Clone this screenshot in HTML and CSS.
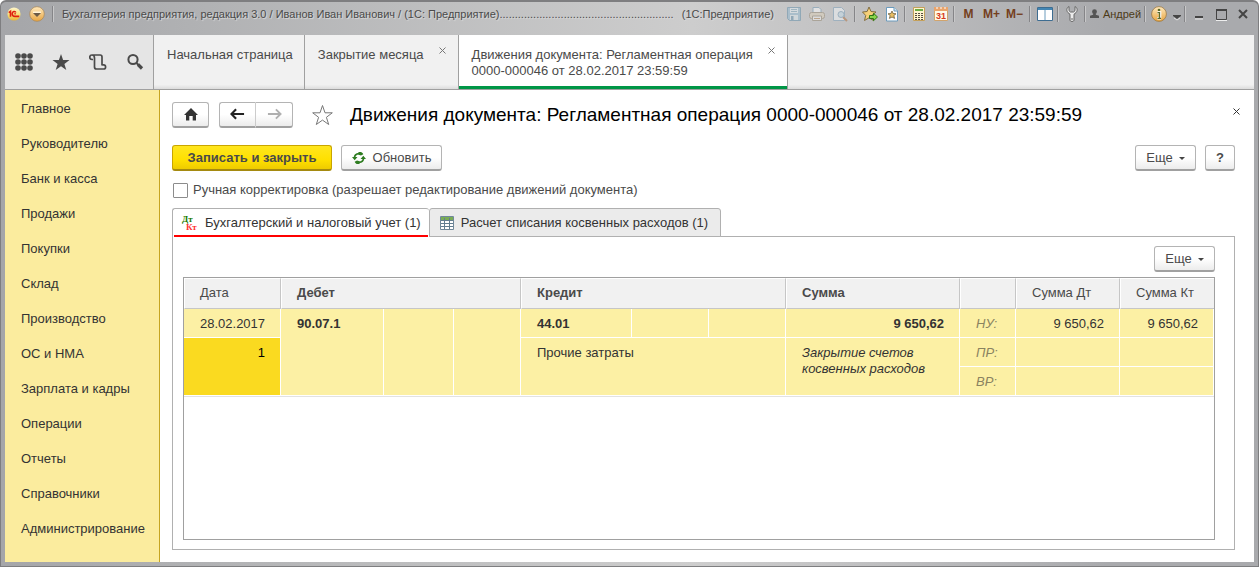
FILE: index.html
```html
<!DOCTYPE html>
<html lang="ru">
<head>
<meta charset="utf-8">
<title>Движения документа</title>
<link rel="stylesheet" href="styles.css">
</head>
<body>
<div class="window">
  <header class="titlebar">
    <svg class="brand" viewBox="0 0 16 16" aria-hidden="true"><defs><linearGradient id="gold" x1="0" y1="0" x2="0" y2="1"><stop offset="0" stop-color="#fff6cc"/><stop offset=".6" stop-color="#f5dc70"/><stop offset="1" stop-color="#e8b33a"/></linearGradient></defs><circle cx="8" cy="8" r="7.5" fill="url(#gold)"/><path d="M2 6.500 4 5v6M10 6.300C9.500 4.500 6 4.800 6 7.700c0 2 1.500 3 3 3h5M10 7.800H8.500" fill="none" stroke="#e02010" stroke-width="1.800"/></svg>
    <button class="round" aria-label="Главное меню"><svg viewBox="0 0 16 16"><defs><linearGradient id="amber" x1="0" y1="0" x2="0" y2="1"><stop offset="0" stop-color="#ffe9bd"/><stop offset="1" stop-color="#e8a541"/></linearGradient></defs><circle cx="8" cy="8" r="7.300" fill="url(#amber)" stroke="#a98555" stroke-width=".7"/><path d="M4 5.500h8v1.500H4z" fill="#fff3d8"/><path d="M4 7h8l-4 4z" fill="#6b5a45"/></svg></button>
    <i class="sep brand-sep"></i>
    <div class="title"><span>Бухгалтерия предприятия, редакция 3.0 / Иванов Иван Иванович / (1С: Предприятие).........................................................</span><span>(1С:Предприятие)</span></div>
    <div class="tools">
      <button class="faded" aria-label="Сохранить"><svg viewBox="0 0 16 16"><path d="M1.500 1.500h13v13h-11l-2-2z" fill="#8fb8cf" stroke="#5d8ca8"/><path d="M4 2h8v5H4z" fill="#e4eff5"/><path d="M5 3.500h6M5 5.500h6" stroke="#7ca5bb"/><path d="M4 9h8v5H4z" fill="#dbe8ee"/><path d="M5 10h2.500v4H5z" fill="#5d8ca8"/></svg></button>
      <button class="faded" aria-label="Печать"><svg viewBox="0 0 16 16"><path d="M4 1.500h6l2 2V7H4z" fill="#fff" stroke="#6f98b5"/><rect x=".5" y="6.500" width="15" height="6" rx="2" fill="#ddd0b8" stroke="#92856f"/><path d="M3.500 10h9v4.500h-9z" fill="#f5f5f5" stroke="#92856f"/><path d="M5 12.500h6" stroke="#b48650"/></svg></button>
      <button class="faded" aria-label="Предварительный просмотр"><svg viewBox="0 0 16 16"><path d="M1.500 1.500h8l3 3v10h-11z" fill="#f4f8fb" stroke="#7ba0bb"/><path d="m11 11 4 4" stroke="#b06f3c" stroke-width="2"/><circle cx="9" cy="8.500" r="3" fill="#c9e1ed" stroke="#7ba0bb"/></svg></button>
      <i class="sep wide"></i>
      <button aria-label="Добавить в избранное"><svg viewBox="0 0 16 16"><path d="m7 1 2 4.500 5 .5-4 3.300 1.200 5L7 11.800 2.500 14.500l1.200-5L.5 6l4.600-.5z" fill="#f6d079" stroke="#816d40"/><path d="M7.500 9.500h4V7.300l4 3.700-4 3.700v-2.200h-4z" fill="#8ad64b" stroke="#2f7813"/></svg></button>
      <button aria-label="Избранное"><svg viewBox="0 0 16 16"><path d="M2.500 1.500H10l3.500 3.500v10h-11z" fill="#fff" stroke="#6b9abc"/><path d="M10 1.500V5h3.500" fill="#d5e7f2" stroke="#6b9abc"/><path d="m8 5 1.100 2.500 2.900.3-2.200 1.700.8 2.900L8 11l-2.600 1.400.8-2.900L4 7.800l2.900-.3z" fill="#eac064" stroke="#6f6141" stroke-width=".8"/></svg></button>
      <i class="sep"></i>
      <button aria-label="Калькулятор"><svg viewBox="0 0 16 16"><path d="M2.500 1.500h11v13h-11z" fill="#fff5cf" stroke="#c4a05b"/><path d="M4 3h8v2H4z" fill="#6cac45"/><path d="M4 7.500h8M4 9.500h8M4 11.500h8M4 13.500h8" stroke="#544b41" stroke-dasharray="2 1"/></svg></button>
      <button aria-label="Календарь"><svg viewBox="0 0 16 16"><path d="M1.500 1.500h13v13h-13z" fill="#fffbe8" stroke="#d1a46d"/><path d="M1 1h14v4H1z" fill="#e9a46c"/><path d="M4 1v2M8 1v2M12 1v2" stroke="#fff"/><text x="8" y="13" text-anchor="middle" class="day">31</text></svg></button>
      <i class="sep"></i>
      <button class="memory">M</button><button class="memory">M+</button><button class="memory">M−</button>
      <i class="sep wide"></i>
      <button aria-label="Панели"><svg viewBox="0 0 16 16"><path d="M.5 1.500h15v13H.5z" fill="#fff" stroke="#3e6d91"/><path d="M1 2h14v2H1z" fill="#4386b4"/><path d="M8 4v10" stroke="#6d9cbd"/></svg></button>
      <i class="sep"></i>
      <button aria-label="Настройка"><svg viewBox="0 0 16 16"><path d="M5 .5v4.200L6.500 6h3L11 4.700V.5c2.700 1.300 3 5 0 7L10 8.200v6c0 1.700-4 1.700-4 0v-6L5 7.500C2 5.500 2.300 1.800 5 .5z" fill="#ececec" stroke="#666"/><circle cx="8" cy="13" r=".8" fill="#555"/></svg></button>
      <i class="sep"></i>
      <button class="user"><svg viewBox="0 0 10 10"><circle cx="5" cy="3" r="2.700"/><path d="M3.500 5h3v1.500L10 7.500V10H0V7.500l3.500-1z"/></svg>Андрей</button>
      <i class="sep"></i>
      <button aria-label="Информация"><svg viewBox="0 0 16 16"><circle cx="8" cy="8" r="7.400" fill="url(#amber)" stroke="#9a7945" stroke-width=".8"/><circle cx="8" cy="4" r="1.300" fill="#5c6b2c"/><path d="M6.500 6.500h2.600V12M6.300 12.300h3.800" fill="none" stroke="#fff" stroke-width="2.400"/><path d="M6.500 6.700h2V12M6.500 12.300h3.500" fill="none" stroke="#5c6b2c" stroke-width="1.300"/></svg></button>
      <button class="more" aria-label="Дополнительно"><svg viewBox="0 0 10 16"><path d="M1 9h8v1L5 13 1 10z" fill="#464646"/><path d="M2 12l3 2 3-2" stroke="#ddd" fill="none"/></svg></button>
      <i class="sep"></i>
      <button aria-label="Свернуть"><svg viewBox="0 0 16 16"><path d="M4 13h8" stroke="#eee"/><path d="M4 11h8" stroke="#444" stroke-width="2"/></svg></button>
      <button aria-label="Развернуть"><svg viewBox="0 0 16 16"><path d="M3 14.500h11" stroke="#eee"/><path d="M3.500 4v9.500h10V4z" fill="none" stroke="#444"/><path d="M3 4h11" stroke="#444" stroke-width="2"/></svg></button>
      <button aria-label="Закрыть окно"><svg viewBox="0 0 16 16"><path d="m4 4 8 8M12 4l-8 8" stroke="#444" stroke-width="2"/></svg></button>
    </div>
  </header>

  <div class="client">
    <nav class="topbar">
      <div class="quick">
        <button aria-label="Разделы"><svg viewBox="0 0 18 18" fill="#4a4a4a"><circle cx="3" cy="3" r="2.800"/><circle cx="9" cy="3" r="2.800"/><circle cx="15" cy="3" r="2.800"/><circle cx="3" cy="9" r="2.800"/><circle cx="9" cy="9" r="2.800"/><circle cx="15" cy="9" r="2.800"/><circle cx="3" cy="15" r="2.800"/><circle cx="9" cy="15" r="2.800"/><circle cx="15" cy="15" r="2.800"/></svg></button>
        <button aria-label="Избранное"><svg viewBox="0 0 18 18"><path d="m9 1 2.100 6H17.500l-5.100 3.900L14.300 17 9 13.300 3.700 17l1.900-6.100L.5 7h6.400z" fill="#4a4a4a"/></svg></button>
        <button aria-label="История"><svg viewBox="0 0 18 18" fill="none" stroke="#4a4a4a" stroke-width="1.700"><path d="M4 6.500H3A1.900 1.900 0 0 1 3 2h8.200c1.300 0 1.800 1 1.800 2v8.500M5.500 5v9c0 1.200.7 2 2 2h7a1.900 1.900 0 0 0 0-4.200h-1.300M3 2c1.600 0 2.500 1 2.500 3"/></svg></button>
        <button aria-label="Поиск"><svg viewBox="0 0 18 18" fill="none" stroke="#4a4a4a"><circle cx="7" cy="6.500" r="4.600" stroke-width="2"/><path d="m10.500 10 2 2" stroke-width="2"/><path d="m12 11.500 4 4" stroke-width="3.200"/></svg></button>
      </div>
      <a class="tab" href="#"><span>Начальная страница</span></a>
      <div class="tab closable"><a href="#">Закрытие месяца</a><button class="close" aria-label="Закрыть вкладку"><svg viewBox="0 0 7 7"><path d="m.5.5 6 6M6.500.5l-6 6"/></svg></button></div>
      <div class="tab closable current"><a href="#">Движения документа: Регламентная операция<br>0000-000046 от 28.02.2017 23:59:59</a><button class="close" aria-label="Закрыть вкладку"><svg viewBox="0 0 7 7"><path d="m.5.5 6 6M6.500.5l-6 6"/></svg></button></div>
    </nav>

    <div class="body">
      <nav class="sidebar">
        <a href="#">Главное</a>
        <a href="#">Руководителю</a>
        <a href="#">Банк и касса</a>
        <a href="#">Продажи</a>
        <a href="#">Покупки</a>
        <a href="#">Склад</a>
        <a href="#">Производство</a>
        <a href="#">ОС и НМА</a>
        <a href="#">Зарплата и кадры</a>
        <a href="#">Операции</a>
        <a href="#">Отчеты</a>
        <a href="#">Справочники</a>
        <a href="#">Администрирование</a>
      </nav>

      <main class="form">
        <div class="heading">
          <button class="btn home" aria-label="Домой"><svg viewBox="0 0 16 14"><path d="M8 1 15 8h-2v5.500H9.700V9H6.300v4.500H3V8H1z" fill="#333"/></svg></button>
          <div class="history">
            <button class="btn" aria-label="Назад"><svg viewBox="0 0 16 12"><path d="M1 6h14M6.500 1 1.500 6l5 5" fill="none" stroke="#222" stroke-width="2.300"/></svg></button>
            <button class="btn" aria-label="Вперед"><svg viewBox="0 0 16 12"><path d="M1 6h14M9.500 1l5 5-5 5" fill="none" stroke="#b0b0b0" stroke-width="2"/></svg></button>
          </div>
          <button class="star" aria-label="В избранное"><svg viewBox="0 0 22 22"><path d="m11 1.500 2.500 7.300h7.300l-5.900 4.500 2.300 7.200-6.200-4.400-6.200 4.400 2.300-7.200-5.900-4.500h7.300z" fill="#fff" stroke="#777"/></svg></button>
          <h1>Движения документа: Регламентная операция 0000-000046 от 28.02.2017 23:59:59</h1>
          <button class="close" aria-label="Закрыть"><svg viewBox="0 0 7 7"><path d="m.5.5 6 6M6.500.5l-6 6"/></svg></button>
        </div>

        <div class="commands">
          <button class="btn primary">Записать и закрыть</button>
          <button class="btn refresh"><svg viewBox="0 0 14 12"><path d="M2.500 6C2.500 3.500 4.200 1.800 7 1.700M11.500 6c0 2.500-1.700 4.200-4.500 4.300" fill="none" stroke="#2f7d22" stroke-width="1.700"/><path d="M0 5h5.500L2.700 8.200zM14 7H8.500l2.800-3.200z" fill="#2f7d22"/><path d="M6.500 0h2.500c1.200.5 2 1.200 2.300 2.300L9 3.500 6.500 2.800zM7.500 12H5c-1.200-.5-2-1.200-2.300-2.300L5 8.500l2.500.7z" fill="#2f7d22"/></svg>Обновить</button>
          <button class="btn menu push">Еще<i class="caret"></i></button>
          <button class="btn help">?</button>
        </div>

        <label class="manual"><input type="checkbox">Ручная корректировка (разрешает редактирование движений документа)</label>

        <div class="pages" role="tablist">
          <button class="page active" role="tab" aria-selected="true"><span class="entry"><span class="dt">Дт</span><span class="kt">Кт</span></span>Бухгалтерский и налоговый учет (1)</button>
          <button class="page" role="tab" aria-selected="false"><svg class="grid" viewBox="0 0 14 14"><path d="M.5.500h13v13H.5z" fill="#fff" stroke="#71889a"/><path d="M1 1h12v3H1z" fill="#79ad55"/><path d="M1 4.500h12M1 7.500h12M1 10.500h12M4.500 2v11M9.500 2v11" stroke="#627d90"/></svg>Расчет списания косвенных расходов (1)</button>
        </div>

        <section class="panel" role="tabpanel">
          <button class="btn menu push">Еще<i class="caret"></i></button>
          <div class="sheet">
            <table>
              <colgroup><col class="w-date"><col class="w-acc"><col class="w-sub"><col class="w-sub2"><col class="w-acc2"><col class="w-sub3"><col class="w-sub3"><col class="w-sum"><col class="w-kind"><col class="w-dt"><col class="w-kt"></colgroup>
              <thead>
                <tr><th class="plain">Дата</th><th colspan="3">Дебет</th><th colspan="3">Кредит</th><th>Сумма</th><th></th><th class="plain">Сумма Дт</th><th class="plain">Сумма Кт</th></tr>
              </thead>
              <tbody>
                <tr><td>28.02.2017</td><td rowspan="3" class="strong">90.07.1</td><td rowspan="3"></td><td rowspan="3"></td><td class="strong">44.01</td><td></td><td></td><td class="strong num">9 650,62</td><td class="kind">НУ:</td><td class="num">9 650,62</td><td class="num">9 650,62</td></tr>
                <tr><td rowspan="2" class="num selected">1</td><td rowspan="2" colspan="3">Прочие затраты</td><td rowspan="2" class="note">Закрытие счетов косвенных расходов</td><td class="kind">ПР:</td><td></td><td></td></tr>
                <tr><td class="kind">ВР:</td><td></td><td></td></tr>
              </tbody>
            </table>
          </div>
        </section>
      </main>
    </div>
  </div>
</div>
</body>
</html>
```

FILE: styles.css
```css
* { box-sizing: border-box; }
body {
  margin: 0;
  font: 13px/16px "Liberation Sans", Arial, sans-serif;
  color: #4a4a4a;
  background: #fff;
}
button {
  margin: 0;
  padding: 0;
  border: 0;
  background: none;
  font: inherit;
  color: inherit;
}
a { color: inherit; text-decoration: none; }
svg { display: block; }

.window {
  display: flex;
  flex-direction: column;
  height: 100vh;
  padding: 0 4px 4px;
  border: 1px solid #7e7e80;
  border-top-width: 2px;
  border-radius: 6px 6px 0 0;
  background: linear-gradient(90deg, #a5a6a9 0, #b0b1b3 15%, #cdcdcd 55%, #c4c4c5 65%, #a9aaad 88%, #a9aaad 100%);
}

/* Title bar */
.titlebar {
  display: flex;
  align-items: center;
  flex: none;
  height: 33px;
  padding: 0 0 10px 2px;
  font-size: 11px;
}
.brand { width: 14px; height: 14px; }
.round { margin-left: 8px; }
.round svg { width: 16px; height: 16px; }
.sep {
  flex: none;
  width: 2px;
  height: 16px;
  margin: 0 2px 0 1px;
  border-left: 1px solid #858588;
  border-right: 1px solid #c8c8c9;
}
.sep.wide { margin: 0 3px; }
.brand-sep { margin: 0 8px 0 7px; }
.title {
  display: flex;
  flex: 1;
  justify-content: space-between;
  min-width: 0;
  white-space: nowrap;
  text-shadow: 1px 1px 1px #dcdcdc;
}
.tools { display: flex; align-items: center; margin-left: 8px; }
.tools button {
  display: flex;
  align-items: center;
  justify-content: center;
  width: 22px;
  height: 20px;
}
.tools svg { width: 16px; height: 16px; }
.tools .faded { width: 23px; opacity: .5; }
.tools .memory { width: 23px; font-weight: bold; font-size: 12px; color: #743f20; }
.tools .user { gap: 4px; width: 55px; color: #4c3a18; }
.tools .user svg { width: 9px; height: 9px; fill: #555; }
.tools .more { width: 13px; }
.tools .more svg { width: 10px; height: 16px; }
.day { font: bold 9px "Liberation Sans", Arial, sans-serif; fill: #d83a1c; }

/* Client area */
.client {
  display: flex;
  flex-direction: column;
  flex: 1;
  min-height: 0;
  background: #fff;
}
.topbar {
  display: flex;
  flex: none;
  height: 55px;
  background: linear-gradient(#f1f1f1 92%, #dcdcdc);
  border-bottom: 1px solid #a0a0a0;
}
.quick {
  display: flex;
  align-items: center;
  gap: 19px;
  width: 149px;
  padding-left: 10px;
  border-right: 1px solid #a0a0a0;
  background: #e5e5e5;
}
.quick svg { width: 18px; height: 18px; }
.tab {
  display: flex;
  justify-content: space-between;
  padding: 12px 11px 0 13px;
  border-right: 1px solid #a0a0a0;
}
.tab.closable { gap: 15px; padding-right: 12px; }
.tab.current { background: #fff; box-shadow: inset 0 -3px #009646; }
.close { align-self: flex-start; }
.close svg { width: 7px; height: 7px; fill: none; stroke: #777; }

.body { display: flex; flex: 1; min-height: 0; }
.sidebar {
  flex: none;
  width: 155px;
  padding-top: 1px;
  border-right: 1px solid #c6a521;
  background: #fbec9e;
  color: #333;
}
.sidebar a { display: block; padding-left: 16px; line-height: 35px; }

/* Form */
.form {
  display: flex;
  flex-direction: column;
  flex: 1;
  min-width: 0;
  padding: 12px 19px 12px 12px;
}
.btn {
  display: flex;
  align-items: center;
  justify-content: center;
  height: 26px;
  border: 1px solid #b4b4b4;
  border-bottom: 2px solid #a0a0a0;
  border-radius: 3px;
  background: linear-gradient(#fff 50%, #ececec);
}
.heading { display: flex; align-items: center; height: 25px; }
.home { width: 37px; margin-right: 10px; }
.home svg { width: 16px; height: 14px; }
.history { display: flex; margin-right: 18px; }
.history .btn { width: 37px; }
.history .btn:first-child { border-radius: 3px 0 0 3px; border-right-color: #ccc; }
.history .btn:last-child { border-radius: 0 3px 3px 0; border-left: 0; }
.history svg { width: 15px; height: 12px; }
.star { margin-right: 16px; }
.star svg { width: 23px; height: 22px; }
h1 {
  flex: 1;
  margin: 0;
  font-size: 19px;
  line-height: 24px;
  font-weight: normal;
  color: #000;
  white-space: nowrap;
}
.heading .close { margin: 6px -5px 0 0; }
.heading .close svg { stroke: #333; }

.commands { display: flex; gap: 9px; margin-top: 18px; }
.primary {
  width: 160px;
  border-color: #c9a500;
  border-bottom-color: #a58a10;
  background: linear-gradient(#ffe61e, #ffe000 60%, #eecb00);
  font-weight: bold;
}
.refresh { gap: 7px; width: 101px; }
.refresh svg { width: 14px; height: 12px; }
.menu { gap: 6px; width: 61px; }
.push { margin-left: auto; }
.caret {
  margin-top: 2px;
  border: 3px solid transparent;
  border-top-color: #444;
  border-bottom: 0;
}
.help { width: 30px; font-weight: bold; }

.manual {
  display: flex;
  align-items: center;
  gap: 5px;
  margin-top: 11px;
  padding-left: 1px;
}
.manual input {
  appearance: none;
  width: 15px;
  height: 15px;
  margin: 0;
  border: 1px solid #8c8c8c;
  border-radius: 1px;
}

.pages { display: flex; margin-top: 10px; color: #333; }
.page {
  position: relative;
  display: flex;
  align-items: center;
  gap: 7px;
  height: 29px;
  padding: 0 9px;
  border: 1px solid #b0b0b0;
  border-radius: 3px 3px 0 0;
  background: #ebebeb;
}
.page + .page { padding: 0 12px 0 10px; }
.page.active { padding-right: 8px; border-right: 0; border-bottom: 0; background: #fff; }
.page.active::after {
  content: "";
  position: absolute;
  left: 1px;
  right: 1px;
  bottom: 0;
  height: 2px;
  background: #f00;
}
.page .grid { width: 14px; height: 14px; }
.entry {
  display: flex;
  flex-direction: column;
  width: 16px;
  font: bold 9px/8px "Liberation Serif", serif;
  text-align: left;
}
.dt { color: #197a00; }
.kt { padding-left: 4px; color: #f33; }

.panel {
  display: flex;
  flex-direction: column;
  flex: 1;
  min-height: 0;
  margin-top: -1px;
  padding: 9px 19px 9px 10px;
  border: 1px solid #b0b0b0;
}
.sheet { flex: 1; margin-top: 5px; border: 1px solid #a0a0a0; }

/* Postings table */
table {
  width: 100%;
  table-layout: fixed;
  border-collapse: separate;
  border-spacing: 0;
  border-bottom: 1px solid #e2e2e2;
}
.w-date { width: 97px; }
.w-acc { width: 103px; }
.w-sub { width: 70px; }
.w-sub2 { width: 67px; }
.w-acc2 { width: 111px; }
.w-sub3 { width: 77px; }
.w-sum { width: 174px; }
.w-kind { width: 56px; }
.w-dt { width: 104px; }
.w-kt { width: 94px; }
th {
  height: 31px;
  padding: 0 15px 2px;
  border: 1px solid #fff;
  border-right-color: #c6c6c6;
  border-bottom-color: #c6c6c6;
  background: #f1f1f1;
  text-align: left;
  white-space: nowrap;
}
th.plain { font-weight: normal; }
td {
  height: 29px;
  padding: 7px 15px 4px 16px;
  border: 0 solid #fff;
  border-width: 0 1px 1px 0;
  background: #fcf0a4;
  color: #333;
  vertical-align: top;
}
th:last-child { border-right: 0; }
.strong { font-weight: bold; }
.num { text-align: right; }
.selected { background: #fada20; color: #000; }
.kind { color: #8a8360; font-style: italic; }
.note { font-style: italic; }
```
